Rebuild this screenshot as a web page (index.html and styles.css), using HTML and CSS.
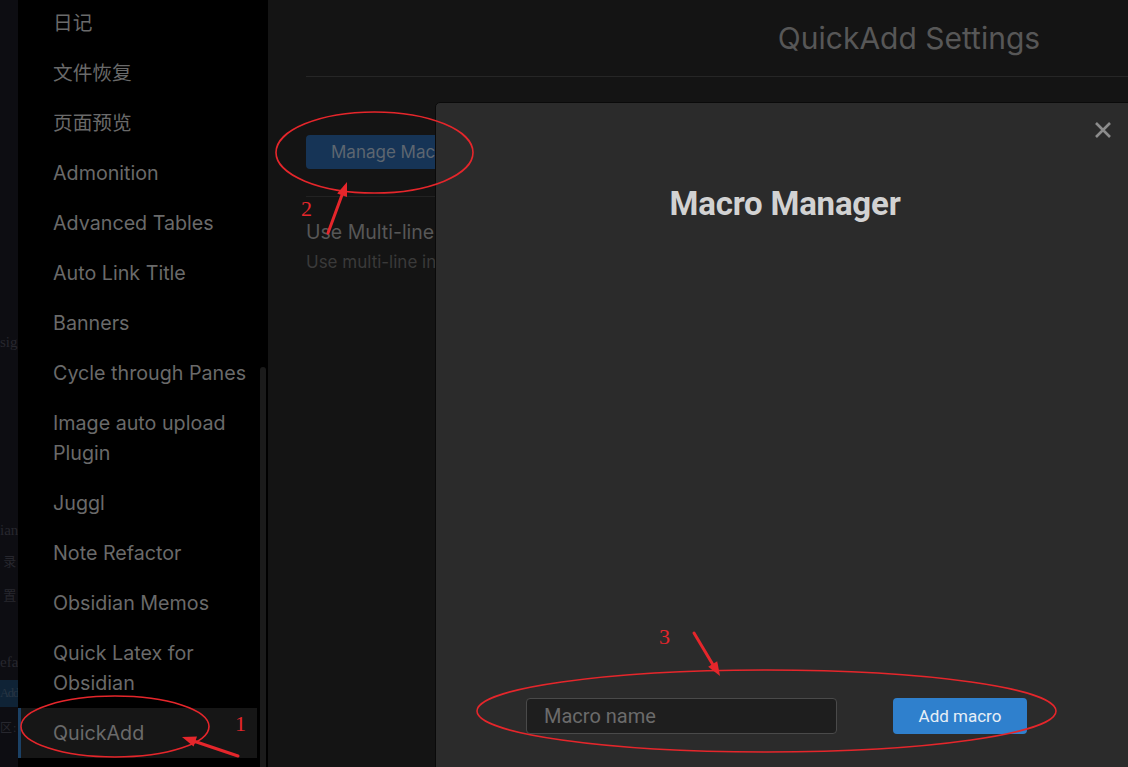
FILE: index.html
```html
<!DOCTYPE html>
<html lang="zh">
<head>
<meta charset="utf-8">
<title>QuickAdd Settings</title>
<link rel="stylesheet" href="styles.css">
</head>
<body>
<div class="app">
  <div class="backdrop-strip">
    <div class="bg-row r-sig">sig</div>
    <div class="bg-row r-ian">ian</div>
    <div class="bg-row r-lu">&nbsp;录</div>
    <div class="bg-row r-zhi">&nbsp;置</div>
    <div class="bg-row r-efa">efa</div>
    <div class="bg-row r-add">Add</div>
    <div class="bg-row r-qu">区 :</div>
  </div>

  <nav class="sidebar">
    <ul class="nav-list">
      <li class="nav-item">日记</li>
      <li class="nav-item">文件恢复</li>
      <li class="nav-item">页面预览</li>
      <li class="nav-item">Admonition</li>
      <li class="nav-item">Advanced Tables</li>
      <li class="nav-item">Auto Link Title</li>
      <li class="nav-item">Banners</li>
      <li class="nav-item">Cycle through Panes</li>
      <li class="nav-item">Image auto upload Plugin</li>
      <li class="nav-item">Juggl</li>
      <li class="nav-item">Note Refactor</li>
      <li class="nav-item">Obsidian Memos</li>
      <li class="nav-item">Quick Latex for Obsidian</li>
      <li class="nav-item is-active">QuickAdd</li>
    </ul>
    <div class="scroll-track"><div class="scroll-thumb"></div></div>
  </nav>

  <main class="content">
    <div class="content-inner">
      <h1 class="settings-title">QuickAdd Settings</h1>
      <div class="setting setting-button-row">
        <button class="btn-manage">Manage Macros</button>
      </div>
      <div class="setting setting-text">
        <div class="setting-name">Use Multi-line Input Prompt</div>
        <div class="setting-desc">Use multi-line input prompt instead of single-line input prompt</div>
      </div>
    </div>
  </main>
</div>

<div class="modal">
  <div class="modal-close-row">
    <svg class="modal-close" width="18" height="18" viewBox="0 0 18 18" aria-label="close">
      <path d="M2 2 L16 16 M16 2 L2 16" stroke="#8c8c8c" stroke-width="2.6" stroke-linecap="butt" fill="none"/>
    </svg>
  </div>
  <h2 class="modal-title">Macro Manager</h2>
  <div class="macro-add-row">
    <input class="macro-input" type="text" placeholder="Macro name">
    <button class="btn-add">Add macro</button>
  </div>
</div>

<svg class="annotations" width="1128" height="767" viewBox="0 0 1128 767">
  <g fill="none" stroke="#e5262b" stroke-width="1.6">
    <ellipse cx="115" cy="726.5" rx="94" ry="30.5"/>
    <ellipse cx="374.5" cy="152.5" rx="98.5" ry="40.5"/>
    <ellipse cx="766.5" cy="711" rx="289.5" ry="41"/>
  </g>
  <g stroke="#e5262b" stroke-width="3" stroke-linecap="round">
    <line x1="238" y1="756" x2="195" y2="741.5"/>
    <line x1="328" y1="233" x2="342" y2="195"/>
    <line x1="694" y1="633" x2="712.5" y2="664"/>
  </g>
  <g fill="#e5262b">
    <polygon points="182,737 197,736.6 193.6,746.4"/>
    <polygon points="347,182 347,197 337.2,193.4"/>
    <polygon points="720,676 708.2,666.8 717.2,661.2"/>
  </g>
  <g fill="#e5262b" font-family="'Liberation Serif', serif" font-size="22">
    <text x="235" y="731">1</text>
    <text x="301" y="216">2</text>
    <text x="659" y="644">3</text>
  </g>
</svg>
</body>
</html>
```

FILE: styles.css
```css
* { box-sizing: border-box; }

html, body {
  margin: 0;
  padding: 0;
  width: 1128px;
  height: 767px;
  overflow: hidden;
  background: #0d0d12;
}

.app {
  display: flex;
  width: 1128px;
  height: 767px;
}

/* dimmed window visible at far left */
.backdrop-strip {
  flex: 0 0 18px;
  width: 18px;
  overflow: hidden;
  display: flex;
  flex-direction: column;
  background: #0d0d12;
  font-family: "Liberation Serif", "Noto Sans CJK SC", serif;
  font-size: 15px;
  color: #27272e;
}
.bg-row {
  white-space: nowrap;
  height: 20px;
  line-height: 20px;
}
.r-sig { margin-top: 332px; }
.r-ian { margin-top: 168px; }
.r-lu  { margin-top: 12px; font-size: 13px; }
.r-zhi { margin-top: 14px; font-size: 13px; }
.r-efa { margin-top: 46px; }
.r-add {
  margin-top: 8px;
  height: 27px;
  line-height: 27px;
  font-size: 12.5px;
  letter-spacing: -1.2px;
  background: #0f2336;
  color: #283644;
}
.r-qu  { margin-top: 11px; font-size: 12px; letter-spacing: -1px; }

/* sidebar */
.sidebar {
  flex: 0 0 250px;
  width: 250px;
  background: #000;
  display: flex;
  overflow: hidden;
}
.nav-list {
  flex: 1;
  list-style: none;
  margin: -2px 0 0 0;
  padding: 0;
}
.nav-item {
  padding: 10px 8px 10px 32px;
  border-left: 3px solid transparent;
  font-family: Inter, "Noto Sans CJK SC", sans-serif;
  font-size: 19.7px;
  line-height: 30px;
  color: #6a6a6a;
}
.nav-item.is-active {
  background: #161616;
  border-left-color: #1b4166;
}
.scroll-track {
  flex: 0 0 11px;
  padding-top: 367px;
}
.scroll-thumb {
  width: 6px;
  height: 420px;
  margin-left: 3px;
  border-radius: 3px;
  background: #1b1b1b;
}

/* main */
.content {
  flex: 1;
  background: #141414;
  overflow: hidden;
}
.content-inner {
  margin-left: 38px;
  width: 1206px;
  font-family: Inter, sans-serif;
}
.settings-title {
  margin: 0;
  height: 77px;
  line-height: 77px;
  text-align: center;
  font-weight: 400;
  font-size: 30px;
  color: #575757;
  border-bottom: 1px solid #262626;
}
.setting-button-row {
  padding: 58px 0 27px;
  border-bottom: 1px solid #222;
}
.btn-manage {
  height: 34px;
  padding: 0 25px;
  border: none;
  border-radius: 4px;
  background: #163456;
  color: #5d6670;
  font-family: Inter, sans-serif;
  font-size: 17px;
  white-space: nowrap;
}
.setting-text {
  padding-top: 23px;
}
.setting-name {
  font-size: 19.5px;
  line-height: 24px;
  color: #575757;
  white-space: nowrap;
}
.setting-desc {
  margin-top: 6px;
  font-size: 17px;
  line-height: 24px;
  color: #3a3a3a;
  white-space: nowrap;
}

/* modal */
.modal {
  position: absolute;
  left: 435px;
  top: 102px;
  width: 700px;
  height: 700px;
  background: #2b2b2b;
  border: 1px solid #0a0a0a;
  border-radius: 5px;
  display: flex;
  flex-direction: column;
  font-family: Roboto, sans-serif;
}
.modal-close-row {
  display: flex;
  justify-content: flex-end;
  padding: 18px 22px 0 0;
}
.modal-close { display: block; }
.modal-title {
  margin: 45px 0 0;
  height: 40px;
  line-height: 40px;
  text-align: center;
  font-size: 33px;
  font-weight: 700;
  letter-spacing: -0.2px;
  color: #d2d2d2;
}
.macro-add-row {
  margin-top: 474px;
  padding-left: 90px;
  display: flex;
  gap: 56px;
}
.macro-input {
  width: 311px;
  height: 36px;
  padding: 0 17px;
  border: 1px solid #4a4a4a;
  border-radius: 4px;
  background: #1e1e1e;
  color: #ccc;
  font-family: Roboto, sans-serif;
  font-size: 20px;
  outline: none;
}
.macro-input::placeholder { color: #6b6b6b; }
.btn-add {
  width: 134px;
  height: 36px;
  border: none;
  border-radius: 4px;
  background: #2f80cd;
  color: #e6eef6;
  font-family: Roboto, sans-serif;
  font-size: 17px;
}

/* annotation overlay */
.annotations {
  position: absolute;
  left: 0;
  top: 0;
  pointer-events: none;
}
```
